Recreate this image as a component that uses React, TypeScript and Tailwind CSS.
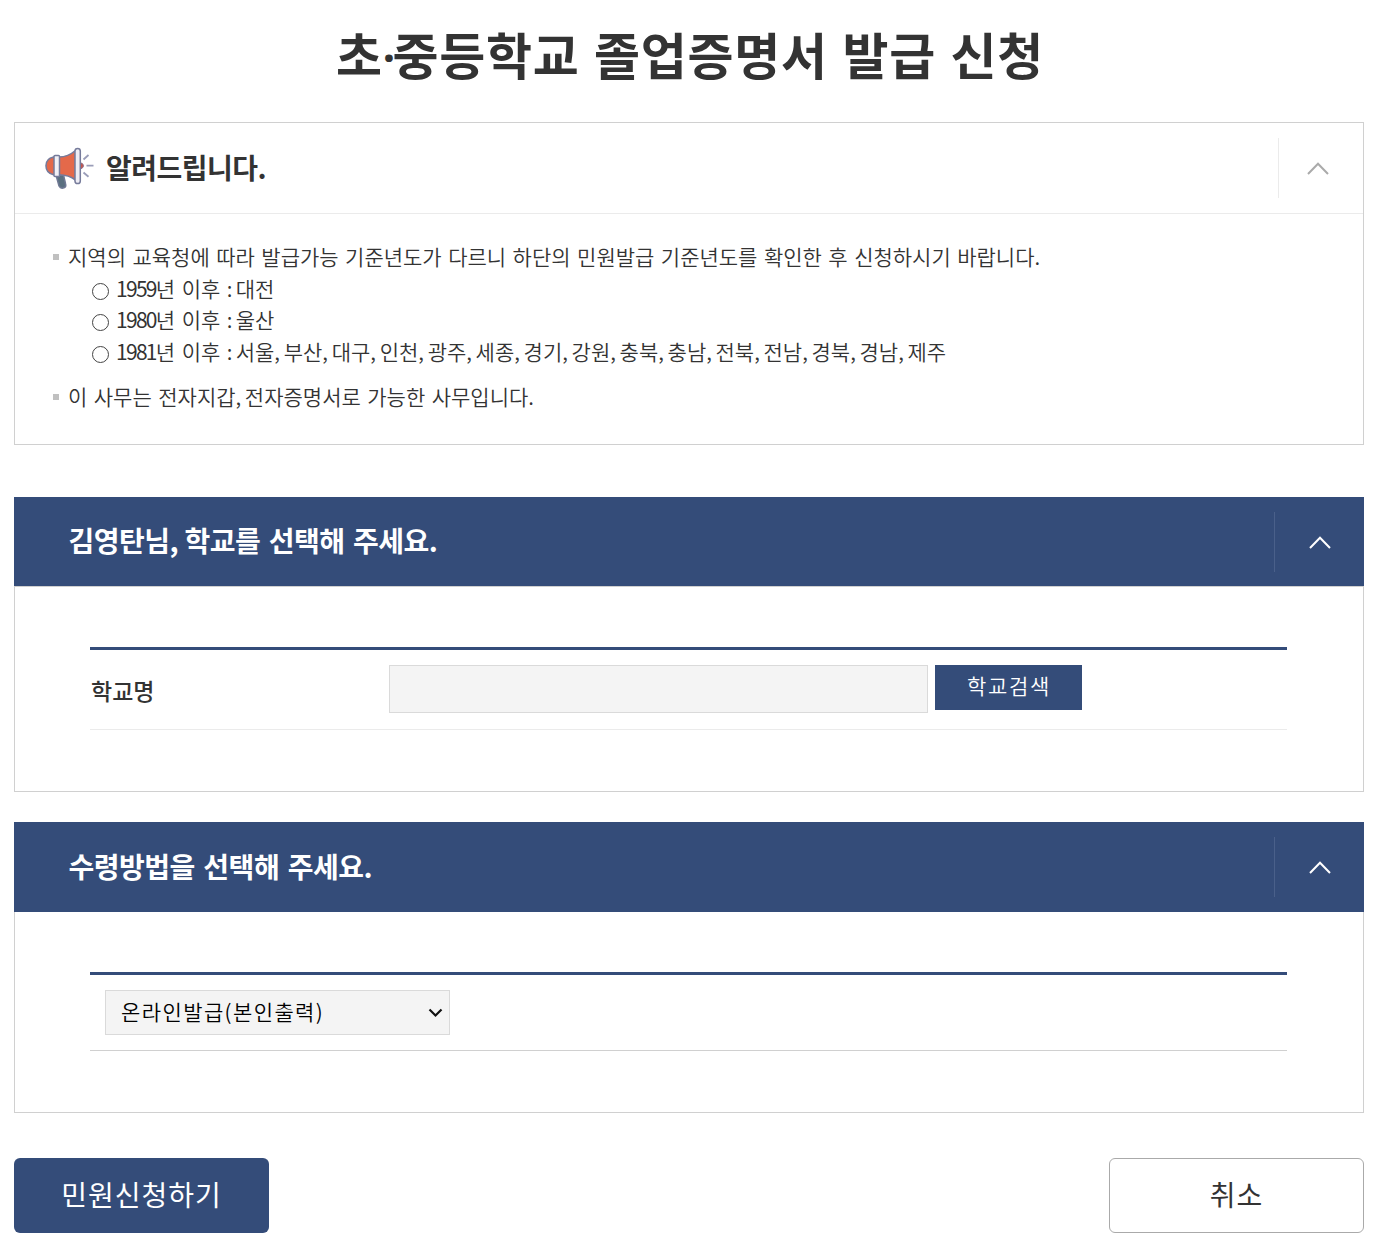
import { Fragment, type ReactNode } from "react";

function Chevron({ className }: { className: string }) {
  return (
    <svg width="24" height="14" viewBox="0 0 24 14" fill="none" className={className}>
      <path d="M2 13 L12 2.700 L22 13" stroke="currentColor" strokeWidth="2" />
    </svg>
  );
}

function Megaphone() {
  return (
    <svg width="50" height="44" viewBox="0 0 50 44" fill="none" className="-ml-px shrink-0">
      <path d="M12 29 L15 40 Q16.500 43 20 41.800 Q22.500 41 21.500 37.500 L19.500 29Z" fill="#5a7080" stroke="#6f7894" strokeWidth="1.500" />
      <path d="M9.500 11 H15 Q24 11 31.500 4.500 V34 Q25 29 15 28.800 H9.500 Q2 27 2 19.800 Q2 12.500 9.500 11Z" fill="#e4694a" stroke="#767b9b" strokeWidth="1.600" />
      <path d="M36 16.500 Q39.500 17.500 39.500 19.800 Q39.500 22 36 23.200Z" fill="#c9554a" stroke="#8a6f8c" strokeWidth="1" />
      <rect x="10" y="9.500" width="5.500" height="21" rx="1" fill="#f1f0f6" stroke="#767b9b" strokeWidth="1.500" />
      <rect x="31" y="2.500" width="5.300" height="35" rx="2.600" fill="#eeedf4" stroke="#767b9b" strokeWidth="1.500" />
      <path d="M39.500 13.500 L44.500 9 M42.500 19.700 H49.500 M39.500 26.500 L44.500 30.800" stroke="#9a9db8" strokeWidth="1.800" />
    </svg>
  );
}

/* Sets commas and colons with a tighter advance than the font's own. */
function Tight({ text }: { text: string }) {
  return text.split(/([,:])/).map((part, i) => (
    <Fragment key={i}>
      {part === "," ? <span className="tracking-[-2.8px]">,</span> : part === ":" ? <span className="tracking-[-3.2px]">:</span> : part}
    </Fragment>
  ));
}

function SectionHeader({ title, className }: { title: string; className: string }) {
  return (
    <div className={`flex items-center bg-[#344c79] text-white ${className}`}>
      <h2 className="grow pb-[3px] pl-[54.5px] text-[28px] leading-[40px] font-bold tracking-[-0.5px] [word-spacing:2.7px]">
        <Tight text={title} />
      </h2>
      <div className="flex h-[60px] w-[90px] items-center justify-center border-l border-[#4a608a]">
        <Chevron className="text-white" />
      </div>
    </div>
  );
}

function Bullet({ text }: { text: string }) {
  return (
    <div className="flex items-center">
      <span className="mt-[2px] mr-[9px] size-[6px] shrink-0 bg-[#c0c0c0]" />
      <span><Tight text={text} /></span>
    </div>
  );
}

function Year({ year, children }: { year: string; children: ReactNode }) {
  return (
    <li className="flex h-[31.5px] items-center">
      <span className="mt-[7px] mr-[7px] size-[17px] shrink-0 rounded-full border border-[#444]" />
      <span>
        <span className="font-normal tracking-[-1.7px]">{year}</span>
        {children}
      </span>
    </li>
  );
}

export default function App() {
  return (
    <main className="h-[1245px] w-[1373px] overflow-hidden bg-white pl-[14px] font-['Noto_Sans_CJK_KR',sans-serif] text-[#333]">
      <div className="w-[1350px]">
        <h1 className="h-[122px] pt-[18px] pl-[2px] text-center text-[50px] leading-[70px] font-bold tracking-[0.75px] whitespace-pre [word-spacing:2.5px]">
          초<span className="align-[1px] font-['Noto_Sans'] text-[44px] leading-none tracking-[-2.6px]">·</span>중등학교 졸업증명서 발급 신청
        </h1>

        <section className="h-[323px] border border-[#d0d0d0]">
          <div className="flex h-[91px] items-center border-b border-[#ebebeb] pl-[30px]">
            <Megaphone />
            <h2 className="grow pb-[3px] pl-[12px] text-[28px] leading-[40px] font-bold tracking-[-0.5px]">알려드립니다.</h2>
            <div className="flex h-[60px] w-[85px] items-center justify-center border-l border-[#ebebeb] pr-[6px]">
              <Chevron className="text-[#aaa]" />
            </div>
          </div>
          <div className="pt-[26px] pl-[38px] text-[21px] leading-[32px] font-[350] [word-spacing:1.8px] whitespace-nowrap">
            <Bullet text="지역의 교육청에 따라 발급가능 기준년도가 다르니 하단의 민원발급 기준년도를 확인한 후 신청하시기 바랍니다." />
            <ul className="mb-[13px] pl-[39px]">
              <Year year="1959"><Tight text="년 이후 : 대전" /></Year>
              <Year year="1980"><Tight text="년 이후 : 울산" /></Year>
              <Year year="1981">
                <Tight text="년 이후 : 서울, 부산, 대구, 인천, 광주, 세종, 경기, 강원, 충북, 충남, 전북, 전남, 경북, 경남, 제주" />
              </Year>
            </ul>
            <Bullet text="이 사무는 전자지갑, 전자증명서로 가능한 사무입니다." />
          </div>
        </section>

        <section className="mt-[52px]">
          <SectionHeader className="h-[89px]" title="김영탄님, 학교를 선택해 주세요." />
          <div className="h-[206px] border border-[#d0d0d0] px-[75px] pt-[60px]">
            <div className="flex h-[83px] w-[1197px] items-start border-t-[3px] border-b border-t-[#344c79] border-b-[#ebebeb] pt-[15px]">
              <label className="w-[299px] pt-[9px] pl-px text-[23px] leading-[32px] font-medium">학교명</label>
              <input className="h-[48px] w-[539px] border border-[#dadada] bg-[#f4f4f4]" readOnly />
              <button className="ml-[7px] h-[45px] w-[147px] bg-[#344c79] pb-[5px] pl-px text-[21px] leading-[40px] font-[350] tracking-[1.7px] text-white">학교검색</button>
            </div>
          </div>
        </section>

        <section className="mt-[30px]">
          <SectionHeader className="h-[90px]" title="수령방법을 선택해 주세요." />
          <div className="h-[201px] border border-t-0 border-[#d0d0d0] px-[75px] pt-[60px]">
            <div className="h-[79px] w-[1197px] border-t-[3px] border-b border-t-[#344c79] border-b-[#d0d0d0] pt-[15px] pl-[15px]">
              <button className="flex h-[45px] w-[345px] items-center justify-between border border-[#dadada] bg-[#f4f4f4] pr-[6px] pl-[15px] text-[21px] leading-[32px] font-[350] tracking-[1.4px] text-black">
                <span className="pb-[4px]">온라인발급(본인출력)</span>
                <svg width="15" height="10" viewBox="0 0 15 10" fill="none">
                  <path d="M1.500 1.500 L7.500 7.500 L13.500 1.500" stroke="#111" strokeWidth="2.200" />
                </svg>
              </button>
            </div>
          </div>
        </section>

        <div className="mt-[45px] flex justify-between text-[28px] leading-[40px] font-normal tracking-[1px]">
          <button className="h-[75px] w-[255px] rounded-[6px] bg-[#344c79] pb-[4px] text-white">민원신청하기</button>
          <button className="h-[75px] w-[255px] rounded-[6px] border border-[#aaa] bg-white pb-[4px]">취소</button>
        </div>
      </div>
    </main>
  );
}
